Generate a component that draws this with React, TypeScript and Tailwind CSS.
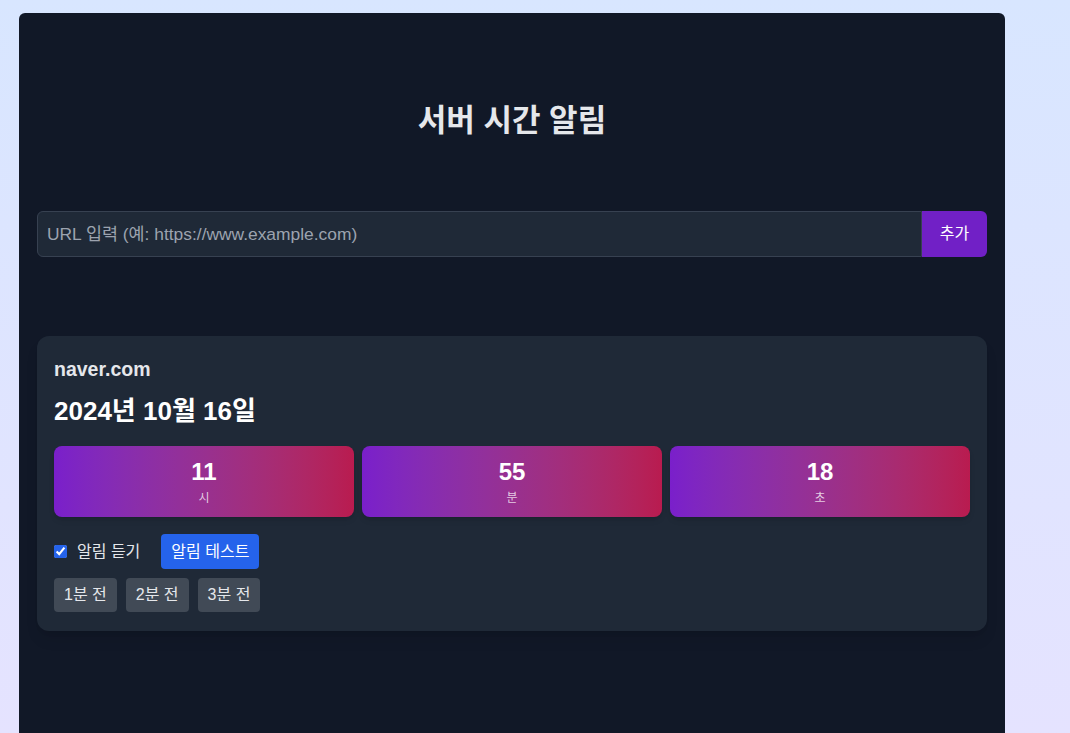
const times = [
  { value: "11", label: "시" },
  { value: "55", label: "분" },
  { value: "18", label: "초" },
];

const offsets = ["1분 전", "2분 전", "3분 전"];

export default function App() {
  return (
    <div
      className="min-h-screen h-[733px] overflow-hidden bg-gradient-to-b from-[#d8e6ff] to-[#e5e3ff] pt-[13px] pl-[19px]"
      style={{ fontFamily: '"Liberation Sans", "Noto Sans CJK KR", sans-serif' }}
    >
      <div className="w-[986px] min-h-[760px] bg-[#111827] rounded-t-md px-[18px] pt-[90px]">
        <h1 className="text-[31px] leading-9 font-bold text-center text-[#e5e7eb]">서버 시간 알림</h1>

        <div className="flex mt-[72px] h-[46px]">
          <input
            type="text"
            placeholder="URL 입력 (예: https://www.example.com)"
            className="flex-1 h-full bg-[#1f2937] border border-[#374151] rounded-l-md px-[9px] text-[17.4px] text-gray-200 placeholder:text-[#9ca3af] focus:outline-none"
          />
          <button className="w-[65px] h-full bg-[#7120c6] text-white text-base rounded-r-md">추가</button>
        </div>

        <div className="mt-[79px] bg-[#1f2937] rounded-xl shadow-lg px-[17px] pt-[19px] pb-[19px]">
          <p className="text-[19.5px] leading-7 font-bold text-[#e5e7eb]">naver.com</p>
          <p className="mt-3 text-[26px] leading-8 font-bold text-white">2024년 10월 16일</p>

          <div className="mt-[19px] grid grid-cols-3 gap-2">
            {times.map((t) => (
              <div
                key={t.label}
                className="h-[71px] rounded-lg shadow-md bg-gradient-to-r from-[#7a1fcb] to-[#b91b4f] flex flex-col items-center justify-center"
              >
                <span className="text-2xl leading-[28px] font-bold text-white">{t.value}</span>
                <span className="mt-1 text-xs leading-4 text-white/75">{t.label}</span>
              </div>
            ))}
          </div>

          <div className="mt-[17px] flex items-center">
            <label className="flex items-center text-base text-[#e5e7eb]">
              <input type="checkbox" defaultChecked className="w-[13px] h-[13px] accent-[#2563eb]" />
              <span className="ml-[10px]">알림 듣기</span>
            </label>
            <button className="ml-[21px] h-[35px] px-[10px] bg-[#2563eb] rounded text-base text-white">알림 테스트</button>
          </div>

          <div className="mt-[9px] flex gap-[9px]">
            {offsets.map((o) => (
              <button key={o} className="h-[34px] px-[10px] bg-[#414a56] rounded text-base text-[#e5e7eb]">
                {o}
              </button>
            ))}
          </div>
        </div>
      </div>
    </div>
  );
}
